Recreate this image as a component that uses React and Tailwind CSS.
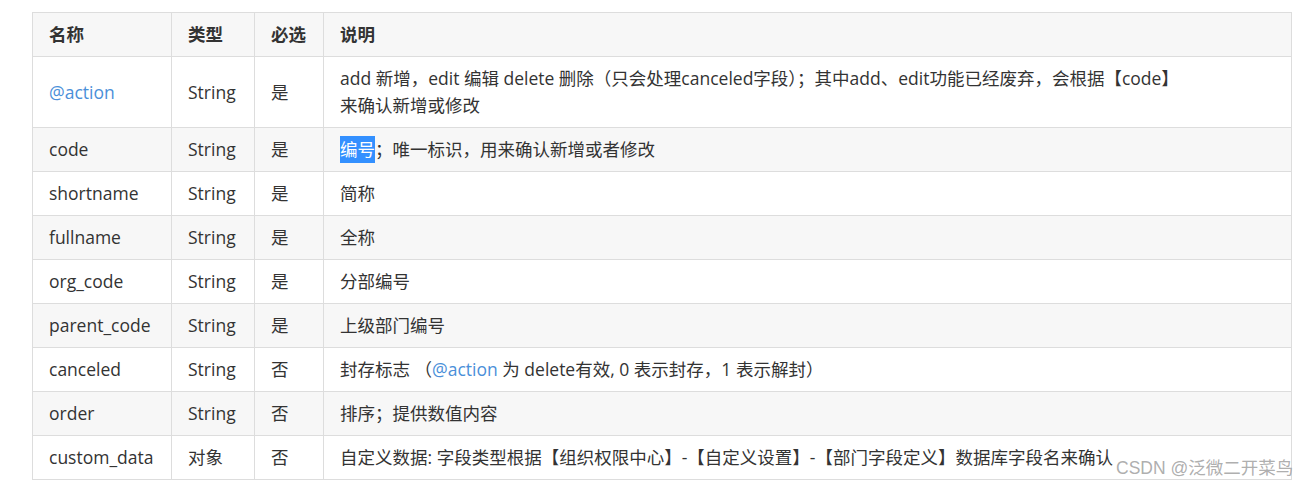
import React from 'react';

const rows = [
  { name: 'code', type: 'String', req: '是', desc: 'code' },
  { name: 'shortname', type: 'String', req: '是', desc: '简称' },
  { name: 'fullname', type: 'String', req: '是', desc: '全称' },
  { name: 'org_code', type: 'String', req: '是', desc: '分部编号' },
  { name: 'parent_code', type: 'String', req: '是', desc: '上级部门编号' },
  { name: 'canceled', type: 'String', req: '否', desc: 'canceled' },
  { name: 'order', type: 'String', req: '否', desc: '排序；提供数值内容' },
  {
    name: 'custom_data',
    type: '对象',
    req: '否',
    desc: '自定义数据: 字段类型根据【组织权限中心】-【自定义设置】-【部门字段定义】数据库字段名来确认',
  },
];

const Link = ({ children }) => <span className="text-[#4a8fd9]">{children}</span>;

const renderDesc = (desc) => {
  if (desc === 'code') {
    return (
      <>
        <span className="inline-block bg-[#3390ff] align-top leading-[27px] text-white">编号</span>；唯一标识，用来确认新增或者修改
      </>
    );
  }
  if (desc === 'canceled') {
    return (
      <>
        封存标志 （<Link>@action</Link> 为 delete有效, 0 表示封存，1 表示解封）
      </>
    );
  }
  return desc;
};

const td = 'border border-[#dddddd] px-4 py-2 align-middle';

export default function App() {
  return (
    <div
      className="relative h-[488px] w-[1313px] bg-white pl-8 pt-3 text-[17.5px] leading-[27px] text-[#333333]"
      style={{ fontFamily: '"Open Sans", "Noto Sans CJK SC", sans-serif' }}
    >
      <table className="w-[1260px] table-fixed border-collapse">
        <colgroup>
          <col className="w-[139px]" />
          <col className="w-[83px]" />
          <col className="w-[69px]" />
          <col />
        </colgroup>
        <thead>
          <tr className="bg-[#f7f7f7] text-left font-bold">
            <th className={td}>名称</th>
            <th className={td}>类型</th>
            <th className={td}>必选</th>
            <th className={td}>说明</th>
          </tr>
        </thead>
        <tbody>
          <tr className="bg-white">
            <td className={td}>
              <Link>@action</Link>
            </td>
            <td className={td}>String</td>
            <td className={td}>是</td>
            <td className={td}>
              add 新增，edit 编辑 delete 删除（只会处理canceled字段）；其中add、edit功能已经废弃，会根据【code】
              <br />
              来确认新增或修改
            </td>
          </tr>
          {rows.map((r, i) => (
            <tr key={r.name} className={i % 2 === 0 ? 'bg-[#f7f7f7]' : 'bg-white'}>
              <td className={td}>{r.name}</td>
              <td className={td}>{r.type}</td>
              <td className={td}>{r.req}</td>
              <td className={`${td} whitespace-nowrap`}>{renderDesc(r.desc)}</td>
            </tr>
          ))}
        </tbody>
      </table>

      {/* watermark */}
      <div
        className="absolute left-[1116px] top-[456px] text-[17.5px] leading-[24px] text-[#999999]/80"
        style={{ fontFamily: '"Liberation Sans", "Noto Sans CJK SC", sans-serif' }}
      >
        CSDN @泛微二开菜鸟
      </div>
    </div>
  );
}
